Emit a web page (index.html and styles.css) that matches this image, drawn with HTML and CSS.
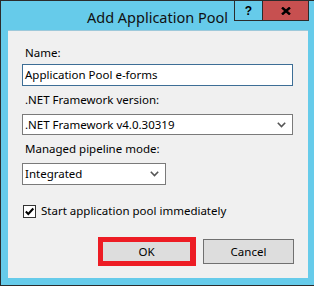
FILE: index.html
```html
<!DOCTYPE html>
<html>
<head>
<meta charset="utf-8">
<link rel="stylesheet" href="styles.css">
</head>
<body>
<div class="window">
  <div class="titlebar">
    <div class="spacer"></div>
    <div class="title">Add Application Pool</div>
    <div class="caption-btns">
      <div class="cbtn help">?</div>
      <div class="cbtn close">
        <svg width="10" height="8" viewBox="0 0 10 8"><path d="M1 0.5 L9 7.5 M9 0.5 L1 7.5" stroke="#000" stroke-width="2.4" fill="none"/></svg>
      </div>
    </div>
  </div>
  <div class="content">
    <div class="lbl lbl-name">Name:</div>
    <div class="field focused">Application Pool e-forms</div>
    <div class="lbl lbl-fw">.NET Framework version:</div>
    <div class="field select">.NET Framework v4.0.30319<svg class="chev" width="9" height="6" viewBox="0 0 9 6"><path d="M0.8 0.8 L4.5 4.5 L8.2 0.8" stroke="#555" stroke-width="1.6" fill="none"/></svg></div>
    <div class="lbl lbl-pipe">Managed pipeline mode:</div>
    <div class="field select short">Integrated<svg class="chev" width="9" height="6" viewBox="0 0 9 6"><path d="M0.8 0.8 L4.5 4.5 L8.2 0.8" stroke="#555" stroke-width="1.6" fill="none"/></svg></div>
    <div class="check-row">
      <span class="checkbox"><svg width="11" height="11" viewBox="0 0 11 11"><path d="M1.8 5.5 L4.3 8 L9.3 2.5" stroke="#000" stroke-width="2" fill="none"/></svg></span>
      <span class="check-label">Start application pool immediately</span>
    </div>
    <div class="buttons">
      <div class="ok-wrap"><div class="btn ok">OK</div></div>
      <div class="btn cancel">Cancel</div>
    </div>
  </div>
</div>
</body>
</html>
```
FILE: styles.css
```css
html, body {
  margin: 0;
  padding: 0;
}
body {
  width: 314px;
  height: 286px;
  overflow: hidden;
  font-family: "Noto Sans", "DejaVu Sans", sans-serif;
}
.window {
  width: 314px;
  height: 286px;
  box-sizing: border-box;
  border: 1px solid #2b2b2b;
  border-right: none;
  background: #66cbea;
  padding: 0 6px 7px 7px;
  display: flex;
  flex-direction: column;
}
.titlebar {
  height: 29px;
  margin-left: -7px;
  margin-right: -6px;
  display: grid;
  grid-template-columns: 1fr auto 1fr;
  align-items: start;
}
.title {
  font-size: 14.5px;
  color: #111;
  line-height: 20px;
  padding-top: 6px;
}
.caption-btns {
  display: flex;
  justify-content: flex-end;
  margin-right: 5px;
}
.cbtn {
  height: 20px;
  box-sizing: border-box;
  border: 1px solid #2b2b2b;
  border-top: none;
  display: flex;
  align-items: center;
  justify-content: center;
}
.help {
  width: 28px;
  border-right: none;
  font-weight: bold;
  font-size: 12px;
  font-family: "Liberation Sans", sans-serif;
  color: #000;
}
.close {
  width: 47px;
  background: #c75050;
}
.content {
  flex: 1;
  background: #f0f0f0;
  border-top: 1px solid #9ec9da;
  padding: 0 14px 0 14px;
  display: flex;
  flex-direction: column;
  font-size: 11.5px;
  color: #000;
}
.lbl {
  line-height: 16px;
  padding-left: 3px;
}
.lbl-name { margin-top: 14px; margin-bottom: 3px; }
.lbl-fw { margin-top: 6px; margin-bottom: 6px; }
.lbl-pipe { margin-top: 6px; margin-bottom: 6px; }
.field {
  height: 22px;
  box-sizing: border-box;
  width: 271px;
  border: 1px solid #7a7a7a;
  background: #fff;
  padding-left: 2px;
  line-height: 20px;
  display: flex;
  align-items: center;
  white-space: nowrap;
}
.field.focused {
  border-color: #3d6e96;
}
.select {
  justify-content: space-between;
  padding-right: 6px;
  height: 21px;
}
.select.short {
  width: 144px;
  height: 22px;
}
.chev {
  flex: none;
}
.check-row {
  display: flex;
  align-items: center;
  margin-top: 18px;
  margin-left: 1px;
}
.checkbox {
  width: 13px;
  height: 13px;
  box-sizing: border-box;
  border: 1px solid #333;
  background: #fff;
  display: flex;
  align-items: center;
  justify-content: center;
}
.check-label {
  margin-left: 5px;
  line-height: 16px;
}
.buttons {
  display: flex;
  justify-content: flex-end;
  align-items: center;
  margin-top: 18px;
  gap: 7px;
}
.ok-wrap {
  border: 5px solid #ed1c24;
  border-right-width: 6px;
}
.btn {
  height: 25px;
  box-sizing: border-box;
  border: 1px solid #707070;
  background: #dddddd;
  display: flex;
  align-items: center;
  justify-content: center;
}
.ok {
  width: 87px;
  height: 19px;
  border: none;
}
.cancel {
  width: 91px;
}
```
